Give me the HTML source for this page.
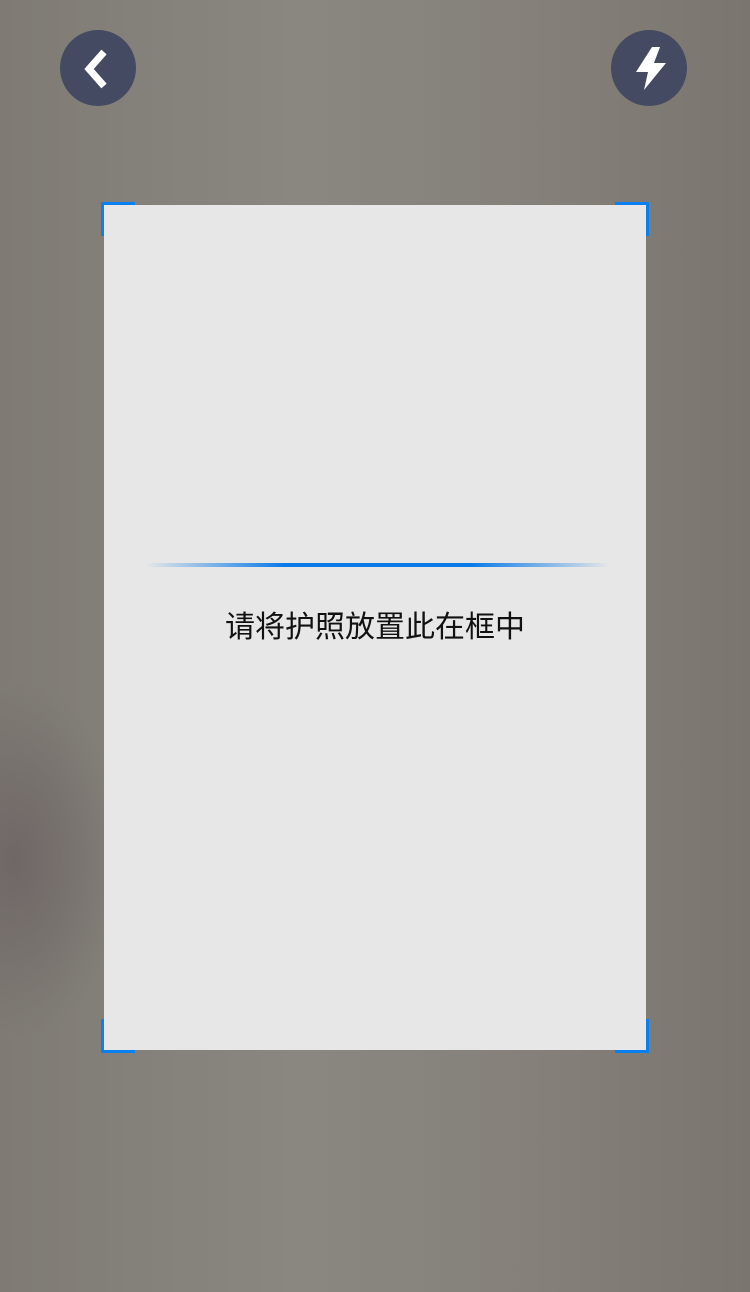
<!DOCTYPE html>
<html><head><meta charset="utf-8"><style>
html,body{margin:0;padding:0}
body{width:750px;height:1292px;position:relative;overflow:hidden;
background:radial-gradient(ellipse 110px 180px at 15px 860px,#6f6766 0%,rgba(111,103,102,0) 100%),linear-gradient(90deg,#7f7b74 0%,#8a8781 40%,#85817a 70%,#7a766f 100%);}
.c{position:absolute;width:76px;height:76px;border-radius:50%;background:#434a62;top:30px}
.panel{position:absolute;left:104px;top:205px;width:542px;height:845px;background:#e7e7e7}
.k{position:absolute;box-sizing:border-box;width:34px;height:34px;border:0 solid #0a7ff0}
.line{position:absolute;left:145px;top:563px;width:465px;height:4px;border-radius:2px;background:linear-gradient(90deg,rgba(10,122,232,0),#0a7ae8 30%,#0a7ae8 70%,rgba(10,122,232,0))}
.t{position:absolute;left:0;width:750px;top:602px;text-align:center;font-size:30px;color:#111;font-family:"Liberation Sans","Noto Sans CJK SC",sans-serif}
</style></head><body>
<div class="c" style="left:60px"><svg width="76" height="76" viewBox="60 30 76 76"><polyline points="104,52 89,69 104,86" fill="none" stroke="#fff" stroke-width="7" stroke-linejoin="miter"/></svg></div>
<div class="c" style="left:611px"><svg width="76" height="76" viewBox="611 30 76 76"><polygon points="652,47 636,72 648,72 644,90 666,63 654,63 660,47" fill="#fff"/></svg></div>
<div class="panel"></div>
<div class="k" style="left:101px;top:202px;border-top-width:3px;border-left-width:3px"></div>
<div class="k" style="left:615px;top:202px;border-top-width:3px;border-right-width:3px"></div>
<div class="k" style="left:101px;top:1019px;border-bottom-width:3px;border-left-width:3px"></div>
<div class="k" style="left:615px;top:1019px;border-bottom-width:3px;border-right-width:3px"></div>
<div class="line"></div>
<div class="t">请将护照放置此在框中</div>
</body></html>
